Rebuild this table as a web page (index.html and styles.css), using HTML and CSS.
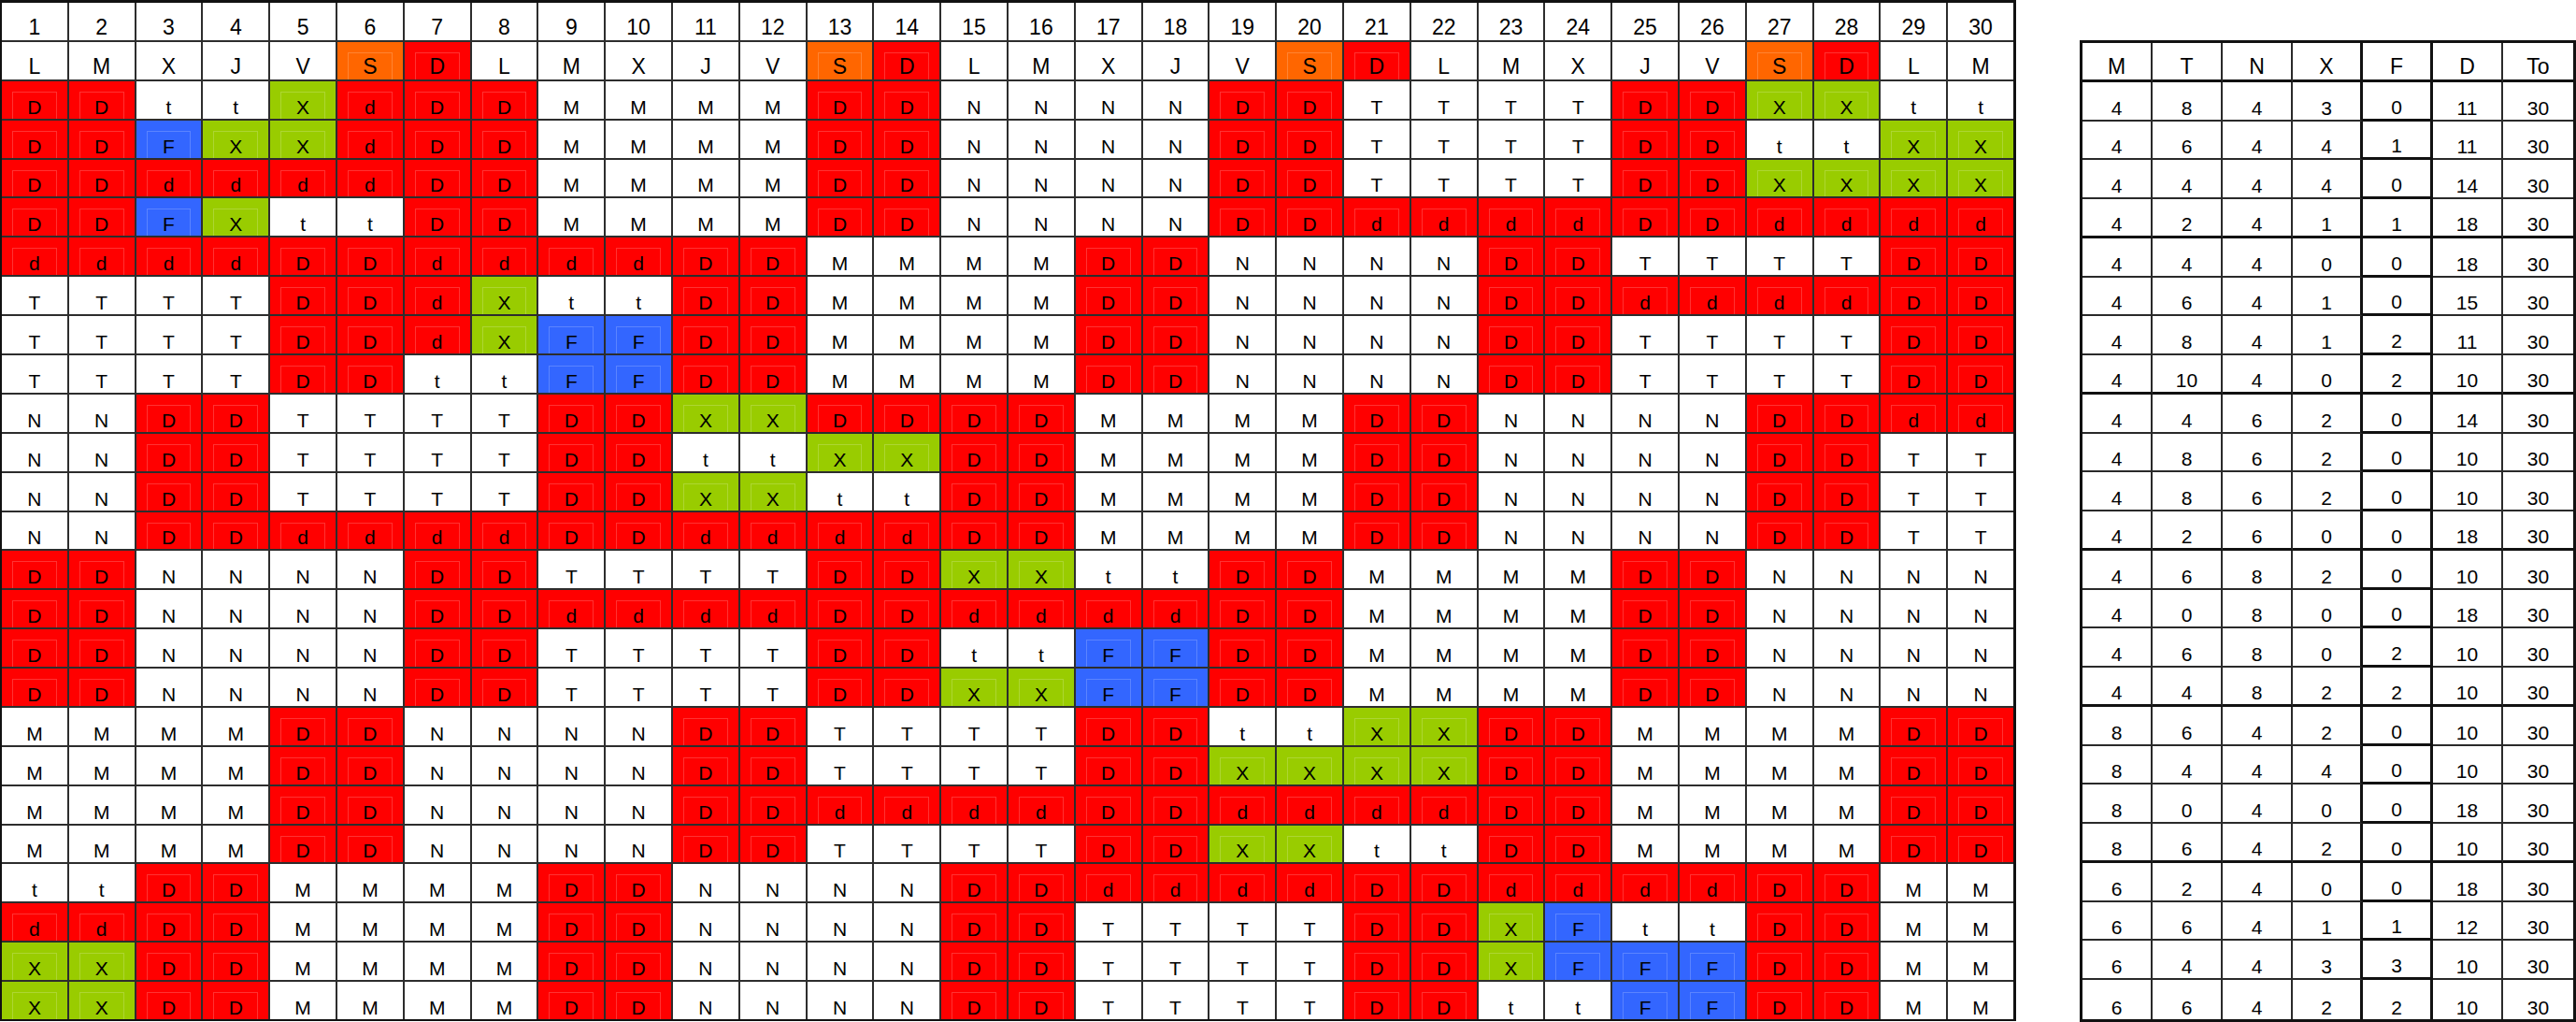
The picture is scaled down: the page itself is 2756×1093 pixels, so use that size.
FILE: index.html
```html
<!DOCTYPE html>
<html lang="es">
<head>
<meta charset="utf-8">
<title>Cuadrante</title>
<link rel="stylesheet" href="styles.css">
</head>
<body>
<main class="page">
  <section class="roster" id="roster"></section>
  <section class="tally" id="tally"></section>
</main>
<script src="app.js"></script>
</body>
</html>
```
FILE: styles.css
```css
* { box-sizing: border-box; margin: 0; padding: 0; }
html, body { background: #fff; }
body {
  width: 2756px;
  height: 1093px;
  overflow: hidden;
  font-family: "Liberation Sans", Arial, sans-serif;
  color: #000;
}
.page {
  display: flex;
  align-items: flex-start;
  gap: 68px;
}
.roster {
  width: 2157px;
  height: 1092px;
  display: grid;
  grid-template-columns: repeat(30, 1fr);
  grid-template-rows: repeat(26, 1fr);
  gap: 2px;
  background: #2d2d2d;
  border: 2px solid #111;
  border-top-width: 3px;
  border-right-width: 3px;
}
.cell {
  position: relative;
  background: #fff;
  display: flex;
  align-items: flex-end;
  justify-content: center;
  padding-bottom: 2px;
  font-size: 21px;
  line-height: 21px;
}
.cell.head {
  font-size: 23px;
  line-height: 23px;
}
.red { background: #ff0000; }
.orange { background: #ff6600; }
.green { background: #99cc00; }
.blue { background: #3366ff; }
.boxed::before {
  content: "";
  position: absolute;
  left: 11px;
  right: 11px;
  top: 11px;
  bottom: 0;
  border: 1px solid rgba(255, 255, 255, 0.2);
  border-bottom: 0;
}
.tally {
  width: 531px;
  height: 1050px;
  margin-top: 43px;
  display: grid;
  grid-template-columns: repeat(7, 1fr);
  grid-template-rows: repeat(25, 1fr);
  border: 3px solid #111;
}
.tcell {
  display: flex;
  align-items: flex-end;
  justify-content: center;
  padding-bottom: 2px;
  font-size: 21px;
  line-height: 21px;
  border-right: 2px solid #2a2a2a;
  border-bottom: 2px solid #2a2a2a;
}
.tcell.head {
  font-size: 23px;
  line-height: 23px;
  border-bottom: 3px solid #111;
}
.tcell.thick-r { border-right: 3px solid #111; }
.tcell.thick-b { border-bottom: 3px solid #111; }
.tcell.last-col { border-right: 0; }
.tcell.last-row { border-bottom: 0; }
```
FILE: app.js
```js
const days = "LMXJVSDLMXJVSDLMXJVSDLMXJVSDLM";
const rows = [
  "DDttXdDDMMMMDDNNNNDDTTTTDDXXtt",
  "DDFXXdDDMMMMDDNNNNDDTTTTDDttXX",
  "DDddddDDMMMMDDNNNNDDTTTTDDXXXX",
  "DDFXttDDMMMMDDNNNNDDddddDDdddd",
  "ddddDDddddDDMMMMDDNNNNDDTTTTDD",
  "TTTTDDdXttDDMMMMDDNNNNDDddddDD",
  "TTTTDDdXFFDDMMMMDDNNNNDDTTTTDD",
  "TTTTDDttFFDDMMMMDDNNNNDDTTTTDD",
  "NNDDTTTTDDXXDDDDMMMMDDNNNNDDdd",
  "NNDDTTTTDDttXXDDMMMMDDNNNNDDTT",
  "NNDDTTTTDDXXttDDMMMMDDNNNNDDTT",
  "NNDDddddDDddddDDMMMMDDNNNNDDTT",
  "DDNNNNDDTTTTDDXXttDDMMMMDDNNNN",
  "DDNNNNDDddddDDddddDDMMMMDDNNNN",
  "DDNNNNDDTTTTDDttFFDDMMMMDDNNNN",
  "DDNNNNDDTTTTDDXXFFDDMMMMDDNNNN",
  "MMMMDDNNNNDDTTTTDDttXXDDMMMMDD",
  "MMMMDDNNNNDDTTTTDDXXXXDDMMMMDD",
  "MMMMDDNNNNDDddddDDddddDDMMMMDD",
  "MMMMDDNNNNDDTTTTDDXXttDDMMMMDD",
  "ttDDMMMMDDNNNNDDddddDDddddDDMM",
  "ddDDMMMMDDNNNNDDTTTTDDXFttDDMM",
  "XXDDMMMMDDNNNNDDTTTTDDXFFFDDMM",
  "XXDDMMMMDDNNNNDDTTTTDDttFFDDMM"
];
const totals = [
  "4 8 4 3 0 11 30",
  "4 6 4 4 1 11 30",
  "4 4 4 4 0 14 30",
  "4 2 4 1 1 18 30",
  "4 4 4 0 0 18 30",
  "4 6 4 1 0 15 30",
  "4 8 4 1 2 11 30",
  "4 10 4 0 2 10 30",
  "4 4 6 2 0 14 30",
  "4 8 6 2 0 10 30",
  "4 8 6 2 0 10 30",
  "4 2 6 0 0 18 30",
  "4 6 8 2 0 10 30",
  "4 0 8 0 0 18 30",
  "4 6 8 0 2 10 30",
  "4 4 8 2 2 10 30",
  "8 6 4 2 0 10 30",
  "8 4 4 4 0 10 30",
  "8 0 4 0 0 18 30",
  "8 6 4 2 0 10 30",
  "6 2 4 0 0 18 30",
  "6 6 4 1 1 12 30",
  "6 4 4 3 3 10 30",
  "6 6 4 2 2 10 30"
];
const shiftColor = { D: "red", d: "red", X: "green", F: "blue" };
const dayColor = { S: "orange", D: "red" };

function add(parent, text, cls) {
  const el = document.createElement("div");
  el.className = cls;
  el.textContent = text;
  parent.appendChild(el);
}

const roster = document.getElementById("roster");
for (let i = 1; i <= 30; i++) add(roster, String(i), "cell head");
for (const ch of days) {
  const c = dayColor[ch];
  add(roster, ch, "cell head" + (c ? " boxed " + c : ""));
}
for (const row of rows) {
  for (const ch of row) {
    const c = shiftColor[ch];
    add(roster, ch, "cell" + (c ? " boxed " + c : ""));
  }
}

const tally = document.getElementById("tally");
const heads = ["M", "T", "N", "X", "F", "D", "To"];
function colClass(j) {
  if (j === 3) return " thick-r";
  if (j === 4) return " thick-r thick-b";
  if (j === 6) return " last-col";
  return "";
}
heads.forEach((h, j) => add(tally, h, "tcell head" + colClass(j)));
totals.forEach((line, i) => {
  const vals = line.split(" ");
  const groupEnd = (i + 1) % 4 === 0 && i < totals.length - 1;
  const lastRow = i === totals.length - 1;
  vals.forEach((v, j) => {
    let cls = "tcell" + colClass(j);
    if (groupEnd) cls += " thick-b";
    if (lastRow) cls += " last-row";
    add(tally, v, cls);
  });
});
```
